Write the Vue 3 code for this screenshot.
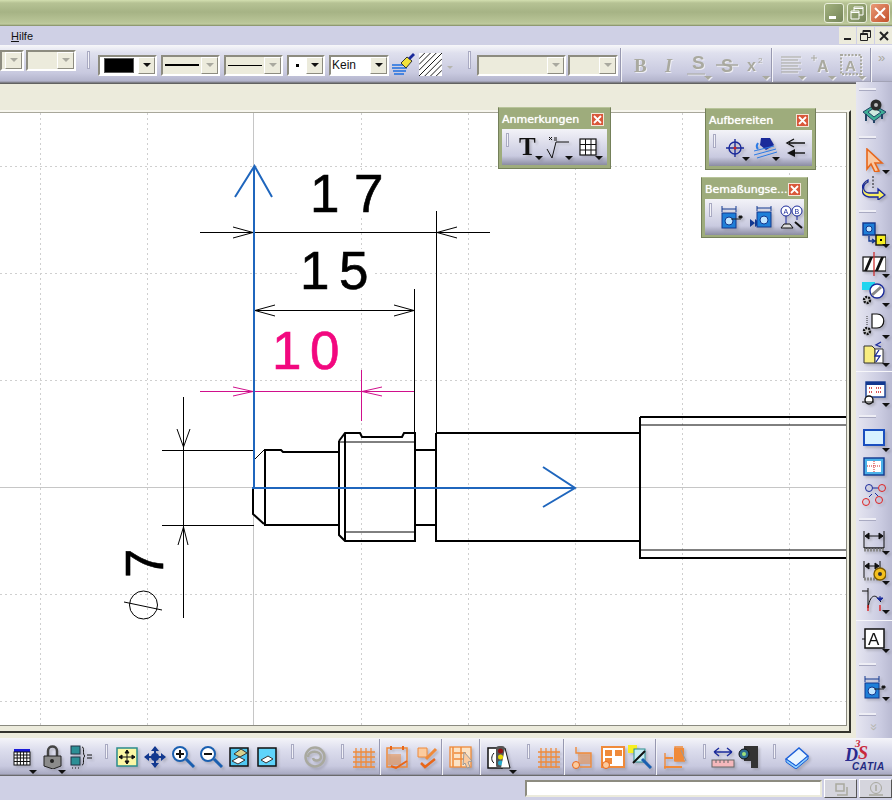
<script setup>
/**
 * DraftingWindow - CATIA drafting workbench with a shaft drawing
 */
const icon = {
  brush: '<path d="M1 12h15M1 15h15M2 18h13M3 21h10" stroke="#1e6fe0" stroke-width="1.5"/><path d="M10 10l6-6 5 4-6 7z" fill="#f2e23c" stroke="#333"/><path d="M17 5l5-5 2 2-5 5z" fill="#1a2a9a"/>',
  hatch: '<rect width="24" height="24" fill="#fff"/><path d="M0 6L6 0M0 12L12 0M0 18L18 0M0 24L24 0M6 24L24 6M12 24L24 12M18 24L24 18" stroke="#111"/>',
  bold: '<text x="6" y="19" font-size="19" font-weight="700" font-family="Liberation Serif" fill="#a9a99f">B</text>',
  italic: '<text x="8" y="19" font-size="18" font-weight="700" font-style="italic" font-family="Liberation Serif" fill="#a9a99f">I</text>',
  under: '<text x="6" y="16" font-size="19" font-weight="700" font-family="Liberation Sans" fill="#a9a99f">S</text><path d="M1 21h18" stroke="#a9a99f"/>',
  strike: '<text x="6" y="19" font-size="18" font-weight="700" font-family="Liberation Sans" fill="#a9a99f">S</text><path d="M1 12h22" stroke="#a9a99f" stroke-width="1.5"/>',
  sup: '<text x="3" y="18" font-size="16" font-weight="700" font-family="Liberation Sans" fill="#a9a99f">x</text><text x="14" y="10" font-size="8" font-family="Liberation Sans" fill="#a9a99f">2</text>',
  align: '<path d="M2 4h20M2 7h17M2 10h20M2 13h17M2 16h20M2 19h17" stroke="#a9a99f" stroke-width="1.2"/>',
  aplus: '<text x="8" y="19" font-size="16" font-weight="700" font-family="Liberation Sans" fill="#a9a99f">A</text><path d="M2 5h6M5 2v6" stroke="#a9a99f"/>',
  abox: '<rect x="2" y="2" width="20" height="19" fill="none" stroke="#a9a99f" stroke-width="2" stroke-dasharray="2 1.5"/><text x="6" y="18" font-size="15" font-weight="700" font-family="Liberation Sans" fill="#a9a99f">A</text>',
  text: '<text x="3" y="20" font-size="25" font-weight="700" font-family="Liberation Serif" fill="#111">T</text>',
  root: '<path d="M1 14l5 9 4-16h13" fill="none" stroke="#111"/><path d="M3 2l3 3M6 2L3 5M8 3h3M8 5h3" stroke="#111"/>',
  table: '<rect x="4" y="4" width="16" height="16" fill="#fff" stroke="#111" stroke-width="1.2"/><path d="M9.500 4v16M15 4v16M4 9.500h16M4 15h16" stroke="#111"/>',
  center: '<circle cx="12" cy="12" r="6" fill="none" stroke="#1a2a9a" stroke-width="1.4"/><path d="M3 12h18M12 3v18" stroke="#1a2a9a" stroke-width="1.4"/><circle cx="12" cy="12" r="1.5" fill="#c22"/>',
  fill: '<path d="M8 2h9l4 7-8 5-6-5z" fill="#1a2a9a"/><path d="M5 7c-2 3-1 5 0 6" stroke="#2c7be5" stroke-width="2" fill="none"/><path d="M1 15l20-5M1 19l22-6M4 22l20-6" stroke="#2c7be5"/>',
  arrows: '<path d="M22 7H6M11 3L4 7l7 4" fill="none" stroke="#111" stroke-width="1.4"/><path d="M22 17H6" stroke="#111" stroke-width="1.4"/><path d="M12 13l-8 4 8 4z" fill="#111"/>',
  dimA: '<rect x="3" y="8" width="14" height="15" fill="#1e7fd8" stroke="#12388f"/><circle cx="10" cy="16" r="4" fill="#bfe4ff" stroke="#12388f"/><path d="M3 4h14M3 1v6M17 1v6" stroke="#12388f"/><path d="M12 14h10M20 11h3v2h-3z" stroke="#222"/>',
  dimB: '<path d="M1 14l5 4-5 4zM6 14l5 4-5 4z" fill="#12388f"/><rect x="8" y="7" width="14" height="15" fill="#1e7fd8" stroke="#12388f"/><circle cx="15" cy="15" r="4" fill="#bfe4ff" stroke="#12388f"/><path d="M8 3h14M8 1v5M22 1v5" stroke="#12388f"/>',
  dimC: '<circle cx="7" cy="6" r="5" fill="#fff" stroke="#1a2a9a"/><circle cx="18" cy="6" r="5" fill="#fff" stroke="#1a2a9a"/><path d="M7 11v8M18 11v4" stroke="#1a2a9a"/><path d="M2 23h12l-3-4H5z" fill="#ddd" stroke="#111"/><path d="M16 17l7 6" stroke="#111" stroke-width="2"/><text x="4.500" y="8.500" font-size="7" font-family="Liberation Sans" fill="#1a2a9a">A</text><text x="15.500" y="8.500" font-size="7" font-family="Liberation Sans" fill="#1a2a9a">B</text>',
  bench: '<path d="M1 13L12 6l12 7-12 9z" fill="#3fae96" stroke="#246"/><path d="M6 13l6-4 7 4-7 5z" fill="#cfe9df" stroke="#246"/><circle cx="14" cy="6" r="5.500" fill="#2b2b2b"/><circle cx="14" cy="6" r="2" fill="#bbb"/><path d="M4 15v7M12 21v3M20 15v5" stroke="#246" stroke-width="2"/>',
  pointer: '<path d="M5 1l15 14h-7l4 8-4 1-4-8-4 5z" fill="#f9c9a3" stroke="#e8661a" stroke-width="1.6"/>',
  rotate: '<path d="M6 6C0 9 0 16 7 17h9v-4l7 6-7 5v-3H7C-2 20-2 8 6 4z" fill="#f8ef60" stroke="#1a2a9a" stroke-width="1.300"/><path d="M11 0v12" stroke="#111" stroke-dasharray="2 1.500"/>',
  view: '<rect x="1" y="1" width="12" height="12" fill="#1e7fd8" stroke="#12388f" stroke-width="1.4"/><circle cx="7" cy="7" r="3" fill="#bfe4ff" stroke="#12388f"/><path d="M7 14v5h5M10 17l3 2-3 2" fill="none" stroke="#12388f" stroke-width="1.4"/><rect x="14" y="13" width="10" height="10" fill="#f6ee22" stroke="#111" stroke-width="1.4"/><rect x="18" y="17" width="2" height="2"/>',
  section: '<rect x="1" y="5" width="23" height="14" fill="#fff" stroke="#111" stroke-width="1.2"/><path d="M2 19L8 5h3L5 19zM13 19l6-14h3l-6 14z" fill="#111"/><path d="M12 0v24" stroke="#c22" stroke-width="1.2"/>',
  detail: '<rect x="0" y="1" width="13" height="8" fill="#21d5ef"/><circle cx="15" cy="10" r="7" fill="#fff" stroke="#1a2a9a" stroke-width="1.4"/><path d="M10 14l9-8" stroke="#888" stroke-width="3"/><circle cx="5" cy="19" r="3" fill="#ccc" stroke="#111" stroke-width="2.400" stroke-dasharray="2 1"/>',
  clip: '<path d="M10 1h5c9 0 9 14 0 14h-5z" fill="#fff" stroke="#111" stroke-width="1.200"/><circle cx="5" cy="18" r="3" fill="#ccc" stroke="#111" stroke-width="2.400" stroke-dasharray="2 1"/><path d="M5 3v10" stroke="#333" stroke-dasharray="1 1"/>',
  update: '<path d="M2 5h8l3 3v14H2z" fill="#f7ec80" stroke="#333"/><path d="M13 8h8v14h-8z" fill="#fff" stroke="#333"/><path d="M19 1l-5 3 5 2M17 9l-4 6h5l-4 6" fill="none" stroke="#1a2a9a" stroke-width="1.300"/>',
  layout: '<rect x="4" y="1" width="19" height="15" fill="#fff" stroke="#12388f" stroke-width="1.400"/><rect x="4" y="1" width="19" height="3" fill="#12388f"/><path d="M7 7h4M7 11h4M14 7h5M14 11h5" stroke="#c22" stroke-dasharray="1 1" stroke-width="1.500"/><circle cx="7" cy="19" r="4" fill="#fff" stroke="#111" stroke-width="1.400"/><path d="M0 21h12" stroke="#111"/>',
  frame: '<rect x="2" y="4" width="20" height="15" fill="#d8f2ff" stroke="#1a4fbf" stroke-width="2"/>',
  frameDash: '<rect x="2" y="3" width="20" height="17" fill="#4bb1e8" stroke="#12388f" stroke-width="1.400"/><rect x="5" y="6" width="14" height="11" fill="#fff"/><path d="M5 11h14M12 6v11" stroke="#c22" stroke-dasharray="1 1"/>',
  circles: '<circle cx="7" cy="5" r="3.500" fill="none" stroke="#1a2a9a"/><circle cx="20" cy="5" r="3.500" fill="none" stroke="#d22"/><circle cx="4" cy="19" r="3.500" fill="none" stroke="#d22"/><circle cx="17" cy="17" r="3.500" fill="none" stroke="#d22"/><path d="M11 5h5M10 11l-3 3M13 10l3 3" stroke="#1a2a9a"/>',
  dimension: '<path d="M2 2v17M22 2v17M3 7h18M3 7l4-3v6zM21 7l-4-3v6z" stroke="#111" fill="#111"/><path d="M2 19h20" stroke="#111" stroke-width="1.400"/><path d="M2 21h20" stroke="#888" stroke-width="3" stroke-dasharray="2 1"/>',
  dimGear: '<path d="M2 2v17M18 2v17M3 7h14M3 7l4-3v6zM17 7l-4-3v6z" stroke="#111" fill="#111"/><path d="M2 20h14" stroke="#888" stroke-width="3" stroke-dasharray="2 1"/><circle cx="18" cy="15" r="6" fill="#f4c01e" stroke="#7a5a00" stroke-width="1.400"/><circle cx="18" cy="15" r="2" fill="#333"/>',
  dimCurve: '<path d="M0 3h6M6 0v8" stroke="#111"/><path d="M6 8v12M6 20c2-14 8-14 11-8l2 2" fill="none" stroke="#111"/><path d="M6 17v6M18 17v6" stroke="#d22" stroke-width="1.400"/><path d="M18 8v4M15 10h6l-3 3z" fill="#1a2a9a" stroke="#1a2a9a"/>',
  textA: '<rect x="3" y="2" width="19" height="19" fill="#fff" stroke="#111" stroke-width="1.500"/><path d="M0 12h3" stroke="#111"/><text x="6" y="18" font-size="17" font-family="Liberation Sans" fill="#111">A</text>',
  grid: '<rect x="4" y="4" width="16" height="3" fill="#1a1ad8"/><rect x="4" y="7" width="16" height="13" fill="#fff" stroke="#111"/><path d="M7.200 7v13M10.400 7v13M13.600 7v13M16.800 7v13M4 10h16M4 13h16M4 16.500h16" stroke="#111"/>',
  lock: '<path d="M8 11V6c0-6 9-6 9 0v5" fill="none" stroke="#444" stroke-width="2.500"/><path d="M4 11h17v10l-8 3-9-3z" fill="#8b8b8b" stroke="#222"/><circle cx="12" cy="16" r="2" fill="#222"/>',
  vars: '<rect x="2" y="1" width="9" height="8" fill="#2c8f96" stroke="#234"/><rect x="2" y="12" width="9" height="8" fill="#2c8f96" stroke="#234"/><path d="M3 23h1M6 23h1M9 23h1" stroke="#111"/><path d="M13 2c3 0 0 8 3 9-3 1 0 9-3 9" fill="none" stroke="#111"/><path d="M18 10h5M18 13h5" stroke="#111"/>',
  fit: '<rect x="2" y="3" width="20" height="18" fill="#fbf7a4" stroke="#2b8c8c" stroke-width="1.500"/><path d="M12 5v14M4 12h16M12 5l-2 3h4zM12 19l-2-3h4zM4 12l3-2v4zM20 12l-3-2v4z" stroke="#111" fill="#111"/>',
  pan: '<path d="M12 2v20M2 12h20" stroke="#12388f" stroke-width="2"/><path d="M12 1l-4 5h8zM12 23l-4-5h8zM1 12l5-4v8zM23 12l-5-4v8z" fill="#12388f"/><circle cx="12" cy="12" r="4" fill="#12388f"/>',
  zoomIn: '<circle cx="9" cy="9" r="7" fill="#fff" stroke="#1a5fb0" stroke-width="2"/><path d="M15 14l8 8" stroke="#1a5fb0" stroke-width="3"/><path d="M5 9h8M9 5v8" stroke="#111" stroke-width="2"/>',
  zoomOut: '<circle cx="9" cy="9" r="7" fill="#fff" stroke="#1a5fb0" stroke-width="2"/><path d="M15 14l8 8" stroke="#1a5fb0" stroke-width="3"/><path d="M5 9h8" stroke="#111" stroke-width="2"/>',
  normal: '<rect x="3" y="3" width="18" height="18" fill="#4fc8f2" stroke="#111" stroke-width="1.500"/><path d="M7 9l7-5 6 4-7 4z" fill="#d8d28e" stroke="#333"/><path d="M5 16l7-4 6 3-7 4z" fill="#fff" stroke="#333"/>',
  normal2: '<rect x="3" y="3" width="18" height="18" fill="#5fd4fb" stroke="#111" stroke-width="1.500"/><path d="M6 15l7-4 5 3-7 4z" fill="#fff" stroke="#333"/>',
  swirl: '<circle cx="12" cy="12" r="9.500" fill="none" stroke="#a9a99f" stroke-width="2.500"/><path d="M5 12c0-7 13-7 13 0 0 4-7 5-8 1" fill="none" stroke="#a9a99f" stroke-width="2.500"/>',
  ogrid: '<path d="M4 3v20M9 3v20M14 3v20M19 3v20M1 7h22M1 12h22M1 17h22M1 22h22" stroke="#ef8a3a" stroke-width="1.300"/>',
  osheet: '<rect x="2" y="3" width="20" height="19" fill="none" stroke="#ef8a3a" stroke-width="1.500"/><rect x="3" y="9" width="13" height="11" fill="#ef8a3a" opacity=".5"/><path d="M6 1v4M18 1v4M6 21l5 2 11-7" fill="none" stroke="#e8661a" stroke-width="2"/>',
  obrush: '<path d="M3 3h9v9H3z" fill="#fbcb9f" stroke="#ef8a3a"/><path d="M11 14l10-10" stroke="#ef8a3a" stroke-width="3"/><path d="M6 18l4 4 10-8" fill="none" stroke="#e8661a" stroke-width="2.500"/>',
  oarrange: '<rect x="1" y="2" width="21" height="20" fill="#fbe3c6" stroke="#ef8a3a" stroke-width="1.300"/><path d="M5 8h12M5 14h12M4 2v20M12 2v20" stroke="#ef8a3a" stroke-width="1.500"/><path d="M15 7l8 9-4 1 2 5-3 1-2-5-2 2z" fill="#fbcb9f" stroke="#999"/>',
  traffic: '<rect x="1" y="3" width="14" height="20" fill="#fff" stroke="#111" stroke-width="1.500"/><path d="M7 8c-3 3-3 8 0 10" fill="none" stroke="#111"/><rect x="9" y="1" width="9" height="22" rx="3" fill="#555"/><circle cx="13.500" cy="6" r="2.500" fill="#8e1010"/><circle cx="13.500" cy="12" r="2.500" fill="#e8d800"/><circle cx="13.500" cy="18" r="2.500" fill="#27a8c8"/><path d="M18 3l5 20H14" fill="#fff" stroke="#111"/>',
  osheetPin: '<path d="M5 2v6h15v14H9" fill="none" stroke="#ef8a3a" stroke-width="1.400"/><rect x="7" y="8" width="13" height="11" fill="#ef8a3a" opacity=".5"/><circle cx="5" cy="20" r="3.500" fill="#fbcb9f" stroke="#e8661a"/>',
  oboxes: '<rect x="1" y="2" width="22" height="20" fill="#fff" stroke="#ef8a3a" stroke-width="2"/><rect x="4" y="5" width="7" height="6" fill="#ef8a3a"/><rect x="14" y="5" width="7" height="6" fill="#ef8a3a"/><rect x="4" y="13" width="7" height="6" fill="#ef8a3a"/><circle cx="5" cy="20" r="3.500" fill="#fbcb9f" stroke="#e8661a"/>',
  search: '<rect x="0" y="0" width="9" height="8" fill="#f6ee22"/><rect x="6" y="4" width="11" height="13" fill="#c7ecf2" stroke="#2b8c8c"/><path d="M5 18L17 6" stroke="#111" stroke-width="2"/><path d="M14 14l9 9" stroke="#1a5fb0" stroke-width="3"/>',
  odim: '<path d="M2 8v16M20 2h-8v14h10" fill="none" stroke="#ef8a3a" stroke-width="1.400"/><rect x="11" y="3" width="10" height="13" fill="#ef8a3a"/><path d="M2 13h8M1 22h18" stroke="#ef8a3a" stroke-width="2"/><path d="M18 5l5 11" stroke="#999"/>',
  ruler: '<path d="M3 7h18M3 7l5-4M3 7l5 4M21 7l-5-4M21 7l-5 4" fill="none" stroke="#1a2a9a" stroke-width="1.400"/><rect x="1" y="15" width="22" height="7" fill="#f5b8bc" stroke="#666"/><path d="M5 15v3M9 15v3M13 15v3M17 15v3" stroke="#666"/>',
  camera: '<path d="M7 1h14v22h-7v-7H7z" fill="#333"/><circle cx="7" cy="9" r="5" fill="#2e6b8f" stroke="#111"/><circle cx="7" cy="9" r="2" fill="#9fe27a"/>',
  book: '<path d="M1 14L14 3l9 8-12 10z" fill="#eaf6ff" stroke="#1a5fd8" stroke-width="1.500"/><path d="M1 14v3l10 7 12-10v-3L11 21z" fill="#8fd0ff" stroke="#1a5fd8"/>'
}

const lineCombos = [
  { w: 59, kind: 'colour' },
  { w: 59, kind: 'thick', off: true },
  { w: 59, kind: 'thin', off: true },
  { w: 38, kind: 'dot' }
]
const formatIcons = [
  { n: 'bold' },
  { n: 'italic' },
  { n: 'under', a: 1 },
  { n: 'strike' },
  { n: 'sup', a: 1 }
]
const alignIcons = ['align', 'aplus', 'abox']

const palettes = [
  { title: 'Anmerkungen', cls: 'pal-notes', items: [{ n: 'text', a: 1 }, { n: 'root', a: 1 }, { n: 'table', a: 1 }] },
  { title: 'Aufbereiten', cls: 'pal-dress', items: [{ n: 'center', a: 1 }, { n: 'fill', a: 1 }, { n: 'arrows' }] },
  { title: 'Bemaßungse...', cls: 'pal-dims', items: [{ n: 'dimA' }, { n: 'dimB' }, { n: 'dimC' }] }
]

// h is the slot height, the column has no even rhythm
const sideItems = [
  { g: 1, h: 14 }, { n: 'bench', h: 30 },
  { g: 1, h: 22 }, { n: 'pointer', h: 24, a: 1 }, { n: 'rotate', h: 32 },
  { g: 1, h: 14 }, { n: 'view', h: 32, a: 1 }, { n: 'section', h: 28, a: 1 }, { n: 'detail', h: 30, a: 1 },
  { n: 'clip', h: 34, a: 1 }, { n: 'update', h: 22, a: 1 },
  { s: 1, h: 14 }, { n: 'layout', h: 30, a: 1 },
  { g: 1, h: 16 }, { n: 'frame', h: 28, a: 1 }, { n: 'frameDash', h: 30 }, { n: 'circles', h: 26 },
  { g: 1, h: 22 }, { n: 'dimension', h: 22, a: 1 }, { n: 'dimGear', h: 38, a: 1 }, { n: 'dimCurve', h: 20, a: 1 },
  { s: 1, h: 20 }, { n: 'textA', h: 18, a: 1 },
  { g: 1, h: 32 }, { n: 'dimA', h: 14, a: 1 },
  { g: 1, h: 40 }
]

const bottomItems = [
  { n: 'grid', a: 1, w: 30 }, { n: 'lock', a: 1, w: 29 }, { n: 'vars', w: 29 }, { g: 1 },
  { n: 'fit' }, { n: 'pan' }, { n: 'zoomIn' }, { n: 'zoomOut' }, { n: 'normal' }, { n: 'normal2' }, { g: 1 },
  { n: 'swirl', w: 32 }, { g: 1 }, { n: 'ogrid', w: 30 }, { s: 1 },
  { n: 'osheet', w: 32 }, { n: 'obrush' }, { s: 1 }, { n: 'oarrange', w: 36 }, { s: 1 },
  { n: 'traffic', a: 1, w: 36 }, { g: 1 }, { n: 'ogrid' }, { s: 1 },
  { n: 'osheetPin', w: 36 }, { n: 'oboxes', w: 24 }, { n: 'search', w: 30 }, { s: 1 }, { n: 'odim', w: 36 }, { g: 1 },
  { n: 'ruler', w: 24 }, { n: 'camera' }, { g: 1 }, { n: 'book', w: 32 }
]

const gridX = [40, 147, 361, 468, 575, 682, 789]
const gridY = [166, 273, 380, 594, 701]

const shaftHeavy = [
  'M264 450H281L283 452H339',
  'M264 525H339',
  'M253 488V514L264 524',
  'M265 450V525',
  'M339 441V535L345 541H415V433H404L402 437H362L360 433H345L339 441',
  'M345 433V541',
  'M415 450H436M415 525H436',
  'M436 433V541H640M436 433H640',
  'M640 417V558H846M640 417H846'
]
const shaftThin = ['M254 460L264 450', 'M339 442H415', 'M345 532H415', 'M640 425H846', 'M640 550H846']
</script>

<template>
  <div class="window">
    <div class="titlebar">
      <span class="win-btn win-min"><i /></span>
      <span class="win-btn win-max">
        <svg viewBox="0 0 14 14" width="14" height="14"><path d="M1 5h8v8H1zM1 6.500h8M4 5V1h9v8H9M4 2.500h9" fill="none" stroke="#fff" /></svg>
      </span>
      <span class="win-btn win-close">
        <svg viewBox="0 0 14 14" width="14" height="14"><path d="M2 2l10 10M12 2L2 12" stroke="#fff" stroke-width="2" /></svg>
      </span>
    </div>

    <div class="menubar">
      <span class="menu-item"><u>H</u>ilfe</span>
      <div class="doc-btns">
        <span class="doc-btn"><i class="doc-min" /></span>
        <span class="doc-btn">
          <svg viewBox="0 0 11 11" width="11" height="11"><path d="M.5 3.500h7v7h-7zM.5 4.500h7M3 3.500v-3h7.500v7h-3M3 1.500h7.500" fill="none" stroke="#222" /></svg>
        </span>
        <span class="doc-btn">
          <svg viewBox="0 0 10 10" width="10" height="10"><path d="M1 1l8 8M9 1L1 9" stroke="#222" stroke-width="2" /></svg>
        </span>
      </div>
    </div>

    <div class="toolbar-top">
      <div class="combo combo-off combo-up combo-w24"><span class="combo-val" /><span class="combo-arrow"><b /></span></div>
      <div class="combo combo-off combo-up combo-w50"><span class="combo-val" /><span class="combo-arrow"><b /></span></div>
      <span class="grip grip-v" />
      <div
        v-for="c in lineCombos"
        :key="c.kind"
        class="combo"
        :class="{ 'combo-off': c.off }"
        :style="{ width: c.w + 'px' }"
      >
        <span class="combo-val">
          <i :class="'val-' + c.kind" />
        </span>
        <span class="combo-arrow"><b /></span>
      </div>
      <div class="combo combo-kein">
        <span class="combo-val kein">Kein</span>
        <span class="combo-arrow"><b /></span>
      </div>
      <svg class="ico" viewBox="0 0 24 24" width="24" height="24" v-html="icon.brush" />
      <svg class="ico hatch" viewBox="0 0 24 24" width="23" height="23" v-html="icon.hatch" />
      <span class="tiny-arrow" />
      <span class="grip grip-v grip-font" />
      <div class="combo combo-off combo-font"><span class="combo-val" /><span class="combo-arrow"><b /></span></div>
      <div class="combo combo-off combo-size"><span class="combo-val" /><span class="combo-arrow"><b /></span></div>
      <span class="sep sep-format" />
      <div v-for="f in formatIcons" :key="f.n" class="tool tool-29">
        <svg viewBox="0 0 24 24" width="24" height="24" v-html="icon[f.n]" />
        <span v-if="f.a" class="drop drop-off" />
      </div>
      <span class="sep sep-align" />
      <div v-for="n in alignIcons" :key="n" class="tool tool-30">
        <svg viewBox="0 0 24 24" width="24" height="24" v-html="icon[n]" />
        <span class="drop drop-off" />
      </div>
      <span class="sep sep-last" />
      <span class="more">»</span>
    </div>

    <div class="workspace">
      <div class="editor">
        <div class="frame">
          <svg class="sheet" viewBox="0 113 846 612" width="846" height="612">
            <path
              v-for="x in gridX"
              :key="'gx' + x"
              :d="`M${x}.5 113V725`"
              class="grid-line"
            />
            <path
              v-for="y in gridY"
              :key="'gy' + y"
              :d="`M0 ${y}.5H846`"
              class="grid-line"
            />
            <path d="M253.500 113V725M0 487.500H846" class="axis-line" />

            <rect x="305" y="172" width="82" height="46" class="mask" />
            <rect x="298" y="249" width="74" height="45" class="mask" />
            <rect x="272" y="329" width="72" height="44" class="mask" />

            <text x="310" y="212" class="dim-text">1</text>
            <text x="354" y="212" class="dim-text">7</text>
            <text x="300" y="289" class="dim-text">1</text>
            <text x="339" y="289" class="dim-text">5</text>
            <text x="272" y="369" class="dim-text dim-pink">1</text>
            <text x="310" y="369" class="dim-text dim-pink">0</text>
            <text transform="translate(163 578) rotate(-90)" class="dim-text">7</text>

            <path v-for="d in shaftHeavy" :key="d" :d="d" class="shaft" />
            <path v-for="d in shaftThin" :key="d" :d="d" class="thin" />

            <path d="M200 232.500H490M436.500 211V433M233 227L253 232.500L233 238M457 227L437 232.500L457 238" class="thin" />
            <path d="M254 310.500H414M414.500 289V433M275 305L255 310.500L275 316M394 305L414 310.500L394 316" class="thin" />
            <path d="M183.500 397V618M162 450.500H254M162 525.500H254M177 429L183.500 447L190 429M178 545L183.500 527L188 545" class="thin" />
            <path d="M200 391.500H414M361.500 370V421M233 387L253 391.500L233 396M382 387L362 391.500L382 396" class="thin-pink" />

            <circle cx="143.500" cy="605" r="14" class="thin" />
            <path d="M124 602L162 610" class="thin" />

            <path d="M254 488V167M235 197L254.500 166L272 197M252 488H575M543 467L575 488L543 507" class="blue" />
          </svg>
        </div>

        <div v-for="p in palettes" :key="p.title" class="palette" :class="p.cls">
          <div class="pal-head">
            <span class="pal-title">{{ p.title }}</span>
            <span class="pal-close">
              <svg viewBox="0 0 9 9" width="9" height="9"><path d="M1 1l7 7M8 1L1 8" stroke="#fff" stroke-width="1.800" /></svg>
            </span>
          </div>
          <div class="pal-body">
            <span class="grip grip-v grip-pal" />
            <div v-for="it in p.items" :key="it.n" class="pal-tool">
              <svg viewBox="0 0 24 24" width="24" height="24" v-html="icon[it.n]" />
              <span v-if="it.a" class="drop" />
            </div>
          </div>
        </div>
      </div>

      <div class="sidebar">
        <div v-for="(s, i) in sideItems" :key="i" class="side-slot" :style="{ height: s.h + 'px' }">
          <span v-if="s.g" class="grip grip-h" />
          <span v-else-if="s.s" class="side-sep" />
          <div v-else class="side-icon">
            <svg viewBox="0 0 24 24" width="24" height="24" v-html="icon[s.n]" />
            <span v-if="s.a" class="drop" />
          </div>
        </div>
        <span class="side-more">»</span>
      </div>
    </div>

    <div class="toolbar-bottom">
      <span class="bar-stub" />
      <template v-for="(b, i) in bottomItems" :key="i">
        <span v-if="b.g" class="grip grip-v grip-bottom" />
        <span v-else-if="b.s" class="sep sep-bottom" />
        <div v-else class="bot-tool" :style="{ width: (b.w || 28) + 'px' }">
          <svg viewBox="0 0 24 24" width="24" height="24" v-html="icon[b.n]" />
          <span v-if="b.a" class="drop" />
        </div>
      </template>
      <div class="logo">
        <svg viewBox="0 0 44 36" width="44" height="36">
          <text class="logo-mark"><tspan x="10" y="10" class="logo-3">3</tspan><tspan x="0" y="24" class="logo-d">D</tspan><tspan x="13" y="22" class="logo-s">S</tspan></text>
          <text x="7" y="33" class="logo-name">CATIA</text>
        </svg>
      </div>
    </div>

    <div class="statusbar">
      <div class="status-input" />
      <div class="status-btn">
        <svg viewBox="0 0 16 16" width="16" height="16"><path d="M3 3h8v7H3zM14 6v8H4" fill="none" stroke="#a9a99f" stroke-width="1.500" /></svg>
      </div>
      <div class="status-btn">
        <svg viewBox="0 0 16 16" width="16" height="16"><circle cx="8" cy="7" r="5.500" fill="none" stroke="#a9a99f" /><path d="M8 4v6M1 14h14" stroke="#a9a99f" stroke-width="1.500" /></svg>
      </div>
    </div>
  </div>
</template>

<style>
html, body {
  margin: 0;
  background: #ecebdc;
}
</style>

<style scoped>
.window {
  width: 892px;
  height: 800px;
  overflow: hidden;
  display: flex;
  flex-direction: column;
  font-family: "Liberation Sans", Arial, sans-serif;
  background: #ecebdc;
}
.titlebar {
  height: 26px;
  box-sizing: border-box;
  display: flex;
  justify-content: flex-end;
  align-items: center;
  gap: 3px;
  padding: 0 2px 1px 0;
  background: linear-gradient(#d3dfb0 0, #b6c294 3px, #a6b385 12px, #b9c597 22px, #c0cb9e 24px, #7f8a62 26px);
}
.win-btn {
  width: 20px;
  height: 20px;
  box-sizing: border-box;
  border: 1px solid #e9eedb;
  border-radius: 3px;
  display: flex;
  align-items: center;
  justify-content: center;
  position: relative;
  background: linear-gradient(135deg, #a3b27e, #75855a);
}
.win-min i {
  width: 7px;
  height: 3px;
  background: #fff;
  position: absolute;
  left: 4px;
  bottom: 3px;
}
.win-close {
  background: linear-gradient(135deg, #e89a78, #c4502a);
}
.menubar {
  height: 19px;
  background: #cfd0e5;
  display: flex;
  align-items: center;
  justify-content: space-between;
}
.menu-item {
  font-size: 11px;
  margin-left: 11px;
  color: #111;
}
.doc-btns {
  display: flex;
  gap: 1px;
  align-self: flex-start;
  margin-top: 1px;
}
.doc-btn {
  width: 17px;
  height: 17px;
  background: #ecebdc;
  display: flex;
  align-items: center;
  justify-content: center;
}
.doc-min {
  width: 7px;
  height: 2px;
  background: #222;
  margin-top: 6px;
}
.toolbar-top {
  height: 39px;
  box-sizing: border-box;
  display: flex;
  align-items: center;
  background: linear-gradient(#f7f7fa 0, #dfe0ee 8px, #c8c9df 28px, #b3b4cc 36px, #6e6e72 38px, #55554f 39px);
}
.combo {
  height: 21px;
  box-sizing: border-box;
  border: 2px solid #8d8c80;
  border-right-color: #fff;
  border-bottom-color: #fff;
  background: #fff;
  display: flex;
  margin-right: 4px;
  margin-top: 1px;
  flex: none;
}
.combo-off {
  background: #ecebdc;
}
.combo-up {
  margin: -9px 2px 0 0;
}
.combo-w24 {
  width: 24px;
}
.combo-w50 {
  width: 50px;
}
.combo-val {
  flex: 1;
  display: flex;
  align-items: center;
  justify-content: center;
  min-width: 0;
}
.val-colour {
  width: 28px;
  height: 13px;
  background: #000;
  border: 1px solid #555;
}
.val-thick {
  width: 34px;
  height: 2px;
  background: #000;
}
.val-thin {
  width: 34px;
  height: 1px;
  background: #000;
}
.val-dot {
  width: 3px;
  height: 3px;
  background: #000;
}
.kein {
  justify-content: flex-start;
  font-size: 12px;
  color: #111;
  padding-left: 1px;
}
.combo-kein {
  width: 60px;
}
.combo-arrow {
  width: 17px;
  box-sizing: border-box;
  background: #ecebdc;
  border: 1px solid;
  border-color: #fff #8d8c80 #8d8c80 #fff;
  display: flex;
  align-items: center;
  justify-content: center;
}
.combo-arrow b {
  width: 0;
  height: 0;
  border: 4px solid transparent;
  border-top: 4px solid #111;
  border-bottom: 0;
}
.combo-off .combo-arrow b {
  border-top-color: #a9a99f;
}
.combo-font {
  width: 89px;
  margin-right: 2px;
}
.combo-size {
  width: 50px;
  margin-right: 2px;
}
.ico {
  flex: none;
  margin-left: -2px;
}
.hatch {
  margin-left: 4px;
}
.tiny-arrow {
  width: 0;
  height: 0;
  border: 3px solid transparent;
  border-top-color: #b5b5ad;
  border-bottom: 0;
  margin: 6px 0 0 5px;
  flex: none;
}
.grip {
  flex: none;
  display: block;
  background: #f2f2f8;
  border: 1px solid #a9aac2;
  box-sizing: border-box;
}
.grip-v {
  width: 3px;
  height: 18px;
  margin: -10px 8px 0 9px;
}
.grip-font {
  margin-left: 15px;
  margin-right: 6px;
}
.grip-pal {
  margin: -14px 4px 0 4px;
  height: 14px;
}
.grip-h {
  width: 17px;
  height: 2px;
  margin: 0 auto 0 3px;
  border: 0;
  background: #eeeef5;
  box-shadow: 0 1px 0 #a9aac2;
}
.sep {
  flex: none;
  width: 2px;
  height: 34px;
  background: #f4f4f8;
  border-left: 1px solid #9798b0;
  box-sizing: border-box;
}
.sep-format {
  margin-right: 3px;
}
.sep-align {
  margin: 0 3px 0 1px;
}
.sep-last {
  margin-left: 4px;
}
.tool {
  flex: none;
  height: 30px;
  position: relative;
  display: flex;
  align-items: center;
  justify-content: center;
  filter: drop-shadow(1px 1px 0 #eeeef5);
}
.tool-29 {
  width: 29px;
}
.tool-30 {
  width: 30px;
}
.drop {
  position: absolute;
  right: 0;
  bottom: 0;
  width: 0;
  height: 0;
  border: 4px solid transparent;
  border-top: 4px solid #111;
  border-bottom: 0;
}
.drop-off {
  border-top-color: #a9a99f;
}
.more {
  color: #a9a99f;
  font-size: 13px;
  margin: -14px 0 0 6px;
}
.workspace {
  height: 654px;
  display: flex;
  position: relative;
}
.editor {
  flex: 1;
  min-width: 0;
  box-sizing: border-box;
  padding-top: 26px;
  background: #ecebdc;
}
.frame {
  height: 623px;
  width: 851px;
  box-sizing: border-box;
  border-top: 2px solid #f7f6ee;
  border-bottom: 2px solid #33332c;
  border-right: 2px solid #33332c;
}
.sheet {
  display: block;
  background: #fff;
  border-top: 1px solid #a8a79a;
  border-right: 1px solid #8a8a80;
  border-bottom: 1px solid #8a8a80;
}
.grid-line {
  stroke: #cfcfcf;
  stroke-width: 1;
  stroke-dasharray: 2 3;
  fill: none;
}
.axis-line {
  stroke: #c6c6c6;
  stroke-width: 1;
  fill: none;
}
.mask {
  fill: #fff;
}
.dim-text {
  font-family: "Liberation Sans", Arial, sans-serif;
  font-size: 53px;
  fill: #000;
  stroke: #000;
  stroke-width: .6px;
}
.dim-pink {
  fill: #f2087f;
  stroke: #f2087f;
}
.shaft {
  fill: none;
  stroke: #000;
  stroke-width: 2;
}
.thin {
  fill: none;
  stroke: #000;
  stroke-width: 1;
}
.thin-pink {
  fill: none;
  stroke: #d0108c;
  stroke-width: 1;
}
.blue {
  fill: none;
  stroke: #1f66bd;
  stroke-width: 2;
}
.palette {
  position: absolute;
  box-sizing: border-box;
  padding: 2px 3px 3px;
  background: #9eac7c;
  border: 1px solid #74805a;
  border-top-color: #b8c49a;
}
.pal-notes {
  left: 498px;
  top: 23px;
  width: 113px;
  height: 62px;
}
.pal-dress {
  left: 705px;
  top: 24px;
  width: 111px;
  height: 62px;
}
.pal-dims {
  left: 701px;
  top: 93px;
  width: 107px;
  height: 61px;
}
.pal-head {
  height: 19px;
  display: flex;
  align-items: center;
  justify-content: space-between;
  padding-right: 3px;
}
.pal-title {
  color: #fff;
  font-size: 11px;
  font-family: "DejaVu Sans", sans-serif;
  text-shadow: 0 0 1px #fff;
  white-space: nowrap;
}
.pal-close {
  width: 13px;
  height: 13px;
  flex: none;
  box-sizing: border-box;
  background: #d9573a;
  border: 1px solid #f3e6d8;
  display: flex;
  align-items: center;
  justify-content: center;
}
.pal-body {
  height: 36px;
  display: flex;
  align-items: center;
  background: linear-gradient(#f3f3f8, #c9cae0 75%, #8b8ca2);
}
.pal-tool {
  width: 30px;
  height: 26px;
  position: relative;
  display: flex;
  align-items: center;
  justify-content: center;
  flex: none;
  filter: drop-shadow(2px 2px 1px rgba(120, 120, 130, .35));
}
.pal-tool svg {
  overflow: visible;
}
.sidebar {
  width: 36px;
  height: 656px;
  margin-top: -2px;
  flex: none;
  display: flex;
  flex-direction: column;
  background: linear-gradient(90deg, #e6e6f1, #c9cae0 70%, #b9bad2);
  position: relative;
}
.side-slot {
  flex: none;
  display: flex;
  align-items: center;
  justify-content: center;
}
.side-icon {
  flex: none;
  width: 36px;
  height: 24px;
  position: relative;
  display: flex;
  align-items: center;
  justify-content: center;
  filter: drop-shadow(2px 2px 1px rgba(120, 120, 130, .35));
}
.side-icon .drop {
  right: 2px;
  bottom: -2px;
}
.side-sep {
  width: 100%;
  height: 1px;
  background: #f7f7fa;
}
.side-more {
  color: #b5b5ad;
  font-size: 13px;
  transform: rotate(90deg);
  text-align: center;
  line-height: 8px;
  margin-top: -11px;
}
.toolbar-bottom {
  height: 38px;
  box-sizing: border-box;
  display: flex;
  align-items: center;
  background: linear-gradient(#f4f4f9 0, #dcdded 12px, #c8c9df 28px, #a9aac2 36px, #55554f 38px);
}
.bar-stub {
  width: 7px;
  flex: none;
}
.bot-tool {
  flex: none;
  height: 34px;
  position: relative;
  display: flex;
  align-items: center;
  justify-content: center;
  filter: drop-shadow(2px 2px 1px rgba(120, 120, 130, .35));
}
.grip-bottom {
  margin: -12px 5px 0 10px;
  height: 15px;
}
.sep-bottom {
  height: 36px;
}
.logo {
  margin-left: auto;
  margin-right: 3px;
  flex: none;
}
.logo-mark {
  font-family: "Liberation Serif", serif;
  font-style: italic;
  font-weight: 700;
}
.logo-3 {
  font-size: 11px;
  fill: #c8283c;
}
.logo-d {
  font-size: 18px;
  fill: #2a2a8f;
}
.logo-s {
  font-size: 18px;
  fill: #c8283c;
}
.logo-name {
  font: italic 700 10px "Liberation Sans", sans-serif;
  letter-spacing: .6px;
  fill: #1f2a80;
}
.statusbar {
  flex: 1;
  background: #cfd0e5;
  display: flex;
  align-items: center;
  justify-content: flex-end;
  gap: 2px;
  padding-top: 1px;
}
.status-input {
  width: 297px;
  height: 17px;
  box-sizing: border-box;
  background: #fff;
  border: 2px solid #8d8c80;
  border-right-color: #ecebdc;
  border-bottom-color: #ecebdc;
}
.status-btn {
  width: 33px;
  height: 19px;
  box-sizing: border-box;
  background: #d5d5dd;
  border: 1px solid;
  border-color: #fff #555 #555 #fff;
  display: flex;
  align-items: center;
  justify-content: center;
}
</style>
